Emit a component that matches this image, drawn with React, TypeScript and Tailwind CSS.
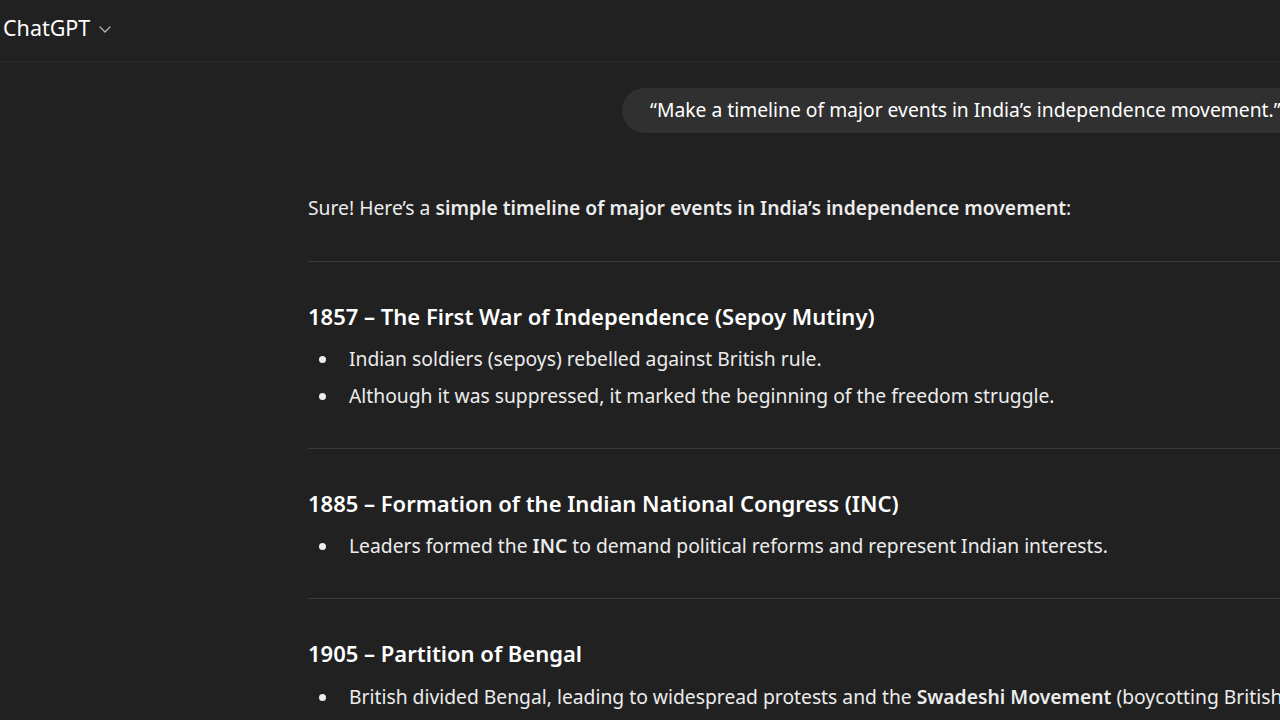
import { ChevronDown } from "lucide-react";

const font = { fontFamily: '"Noto Sans", "Open Sans", sans-serif' };

function Bullet({ children }: { children: React.ReactNode }) {
  return (
    <li className="flex items-center h-[37px]">
      <span className="w-[41px] shrink-0 pl-[11px] flex items-center">
        <span className="block w-[7px] h-[7px] rounded-full bg-[#ececec]" />
      </span>
      <span className="whitespace-nowrap">{children}</span>
    </li>
  );
}

export default function App() {
  return (
    <div className="w-[1280px] h-[720px] overflow-hidden bg-[#212121] text-[#ececec]" style={font}>
      <header className="h-[62px] border-b border-[#2a2a2a] flex items-center pl-[3px] pb-[5px]">
        <span className="text-[21.5px] text-white">ChatGPT</span>
        <svg className="ml-[8px] mt-[2px] w-[14px] h-[14px] text-[#b4b4b4]" viewBox="0 0 14 14" fill="none" stroke="currentColor" strokeWidth="1.3" strokeLinecap="round" strokeLinejoin="round">
          <path d="M2 5l5 5 5-5" />
        </svg>
      </header>

      <div className="pl-[308px]">
        <div className="flex justify-start pt-[26px] pl-[314px]">
          <div className="h-[45px] rounded-l-full bg-[#303030] pl-[28px] pr-[20px] flex items-center text-[19.3px] whitespace-nowrap text-white">
            “Make a timeline of major events in India’s independence movement.”
          </div>
        </div>

        <p className="mt-[62px] text-[19.3px] leading-[26px] whitespace-nowrap">
          Sure! Here’s a <strong className="font-semibold">simple timeline of major events in India’s independence movement</strong>:
        </p>

        <hr className="mt-[40px] border-t border-[#3a3a3a]" />

        <h3 className="mt-[39px] text-[22px] font-semibold leading-[30px] text-white">
          1857 – The First War of Independence (Sepoy Mutiny)
        </h3>
        <ul className="mt-[10px] text-[19.3px]">
          <Bullet>Indian soldiers (sepoys) rebelled against British rule.</Bullet>
          <Bullet>Although it was suppressed, it marked the beginning of the freedom struggle.</Bullet>
        </ul>

        <hr className="mt-[33px] border-t border-[#3a3a3a]" />

        <h3 className="mt-[39px] text-[22px] font-semibold leading-[30px] text-white">
          1885 – Formation of the Indian National Congress (INC)
        </h3>
        <ul className="mt-[10px] text-[19.3px]">
          <Bullet>
            Leaders formed the <strong className="font-semibold">INC</strong> to demand political reforms and represent Indian interests.
          </Bullet>
        </ul>

        <hr className="mt-[33px] border-t border-[#3a3a3a]" />

        <h3 className="mt-[39px] text-[22px] font-semibold leading-[30px] text-white">
          1905 – Partition of Bengal
        </h3>
        <ul className="mt-[11px] text-[19.3px]">
          <Bullet>
            British divided Bengal, leading to widespread protests and the <strong className="font-semibold">Swadeshi Movement</strong> (boycotting British goods).
          </Bullet>
        </ul>
      </div>
    </div>
  );
}
